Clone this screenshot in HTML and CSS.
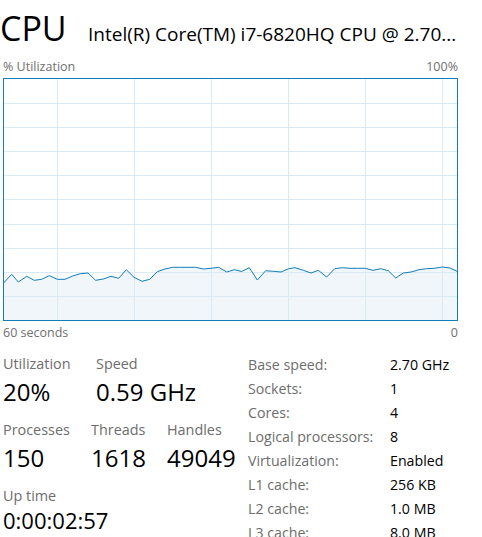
FILE: index.html
```
<!DOCTYPE html>
<html lang="en">
    <head>
        <title>CPU</title>
        <link rel="stylesheet" href="styles.css">
    </head>
    <body>
        <div class="perf">
            <div class="head">
                <h1 class="title">CPU</h1>
                <span class="model">Intel(R) Core(TM) i7-6820HQ CPU @ 2.70...</span>
            </div>

            <div class="axis axis-top">
                <span>% Utilization</span>
                <span>100%</span>
            </div>

            <div class="graph">
                <svg width="453" height="241" viewBox="4 79 453 241">
                    <polygon class="area" points="3.3,283.3 11.7,274.3 18.3,282 26.7,276.3 34.3,280.3 41.7,279.3 49.3,275.7 57.3,279.3 65,279.3 72.7,276 80.3,273.7 88,273 95.7,280.3 103.3,279 111,276.3 118.7,278.3 126.3,269.7 134,277.3 142,281.3 149.7,279.3 157.3,271.7 165,269 172.7,267.3 180.3,267.3 188,267.3 195.7,267.3 203.3,269 211,268.3 218.7,267.3 226.7,272 234.3,269.7 241.7,271.5 249.3,267.7 257.3,280 265.7,270.7 273.3,271.3 281,272 288.7,268.7 295,267.7 303.3,270.3 311,273 318.3,270.3 326.7,277 334.7,268.7 342.3,267.7 350,268.3 357.7,268.3 365.3,268.3 373,270.3 380.7,268.7 388.3,270.7 395.7,278 403.3,273 411,272 419,269.7 426.7,268.7 434.3,268.3 442.3,267 450,268 457,271.3 457,320 3.3,320"/>
                    <g class="grid">
                        <line x1="4" x2="457" y1="103.5" y2="103.5"/>
                        <line x1="4" x2="457" y1="127.5" y2="127.5"/>
                        <line x1="4" x2="457" y1="151.5" y2="151.5"/>
                        <line x1="4" x2="457" y1="175.5" y2="175.5"/>
                        <line x1="4" x2="457" y1="199.5" y2="199.5"/>
                        <line x1="4" x2="457" y1="224.5" y2="224.5"/>
                        <line x1="4" x2="457" y1="248.5" y2="248.5"/>
                        <line x1="4" x2="457" y1="272.5" y2="272.5"/>
                        <line x1="4" x2="457" y1="296.5" y2="296.5"/>
                        <line x1="57.5" x2="57.5" y1="79" y2="320"/>
                        <line x1="134.5" x2="134.5" y1="79" y2="320"/>
                        <line x1="211.5" x2="211.5" y1="79" y2="320"/>
                        <line x1="288.5" x2="288.5" y1="79" y2="320"/>
                        <line x1="365.5" x2="365.5" y1="79" y2="320"/>
                        <line x1="442.5" x2="442.5" y1="79" y2="320"/>
                    </g>
                    <polyline class="usage" points="3.3,283.3 11.7,274.3 18.3,282 26.7,276.3 34.3,280.3 41.7,279.3 49.3,275.7 57.3,279.3 65,279.3 72.7,276 80.3,273.7 88,273 95.7,280.3 103.3,279 111,276.3 118.7,278.3 126.3,269.7 134,277.3 142,281.3 149.7,279.3 157.3,271.7 165,269 172.7,267.3 180.3,267.3 188,267.3 195.7,267.3 203.3,269 211,268.3 218.7,267.3 226.7,272 234.3,269.7 241.7,271.5 249.3,267.7 257.3,280 265.7,270.7 273.3,271.3 281,272 288.7,268.7 295,267.7 303.3,270.3 311,273 318.3,270.3 326.7,277 334.7,268.7 342.3,267.7 350,268.3 357.7,268.3 365.3,268.3 373,270.3 380.7,268.7 388.3,270.7 395.7,278 403.3,273 411,272 419,269.7 426.7,268.7 434.3,268.3 442.3,267 450,268 457,271.3"/>
                </svg>
            </div>

            <div class="axis axis-bottom">
                <span>60 seconds</span>
                <span>0</span>
            </div>

            <div class="details">
                <div class="dynamic">
                    <div class="stat-row">
                        <div class="stat stat-util">
                            <div class="label">Utilization</div>
                            <div class="value">20%</div>
                        </div>
                        <div class="stat">
                            <div class="label">Speed</div>
                            <div class="value">0.59 GHz</div>
                        </div>
                    </div>
                    <div class="stat-row">
                        <div class="stat stat-proc">
                            <div class="label">Processes</div>
                            <div class="value">150</div>
                        </div>
                        <div class="stat stat-threads">
                            <div class="label">Threads</div>
                            <div class="value">1618</div>
                        </div>
                        <div class="stat">
                            <div class="label">Handles</div>
                            <div class="value">49049</div>
                        </div>
                    </div>
                    <div class="stat-row">
                        <div class="stat">
                            <div class="label">Up time</div>
                            <div class="value value-small">0:00:02:57</div>
                        </div>
                    </div>
                </div>

                <table class="specs">
                    <tr><td class="key">Base speed:</td><td>2.70 GHz</td></tr>
                    <tr><td class="key">Sockets:</td><td>1</td></tr>
                    <tr><td class="key">Cores:</td><td>4</td></tr>
                    <tr><td class="key">Logical processors:</td><td>8</td></tr>
                    <tr><td class="key">Virtualization:</td><td>Enabled</td></tr>
                    <tr><td class="key">L1 cache:</td><td>256 KB</td></tr>
                    <tr><td class="key">L2 cache:</td><td>1.0 MB</td></tr>
                    <tr><td class="key">L3 cache:</td><td>8.0 MB</td></tr>
                </table>
            </div>
        </div>
    </body>
</html>
```

FILE: styles.css
```
body {
    margin: 0;
    background: #fff;
    color: #000;
    font-family: "Open Sans", "Noto Sans", sans-serif;
    overflow: hidden;
}

.perf {
    width: 455px;
    margin-left: 3px;
}

.head {
    display: flex;
    align-items: baseline;
    height: 56px;
}
.title {
    width: 88px;
    margin: 0 0 0 -3px;
    font-size: 34px;
    font-weight: 400;
    line-height: 56px;
}
.model {
    font-size: 19px;
    white-space: nowrap;
    overflow: hidden;
}

.axis {
    display: flex;
    justify-content: space-between;
    font-size: 12.5px;
    color: #707070;
}
.axis-top { line-height: 22px; }
.axis-bottom { line-height: 24px; }

.graph {
    width: 455px;
    height: 243px;
    box-sizing: border-box;
    border: 1px solid #117dbb;
}
.graph svg { display: block; }
.area { fill: #f1f6fa; }
.grid line { stroke: #d9eaf4; stroke-width: 1; }
.usage { fill: none; stroke: #117dbb; stroke-width: 1; }

.details {
    display: flex;
    padding-top: 8px;
}
.dynamic { width: 245px; }

.stat-row {
    display: flex;
    margin-bottom: 10px;
}
.stat-util { width: 93px; }
.stat-proc { width: 88px; }
.stat-threads { width: 76px; }

.label {
    font-size: 14.4px;
    line-height: 22px;
    color: #6d6d6d;
}
.value {
    font-size: 24px;
    line-height: 34px;
}
.value-small {
    font-size: 22px;
    line-height: 26px;
}

.specs {
    border-collapse: collapse;
    font-size: 14.2px;
}
.specs td {
    padding: 0;
    height: 24px;
    line-height: 24px;
    white-space: nowrap;
}
.specs .key {
    width: 142px;
    color: #6d6d6d;
}
```
